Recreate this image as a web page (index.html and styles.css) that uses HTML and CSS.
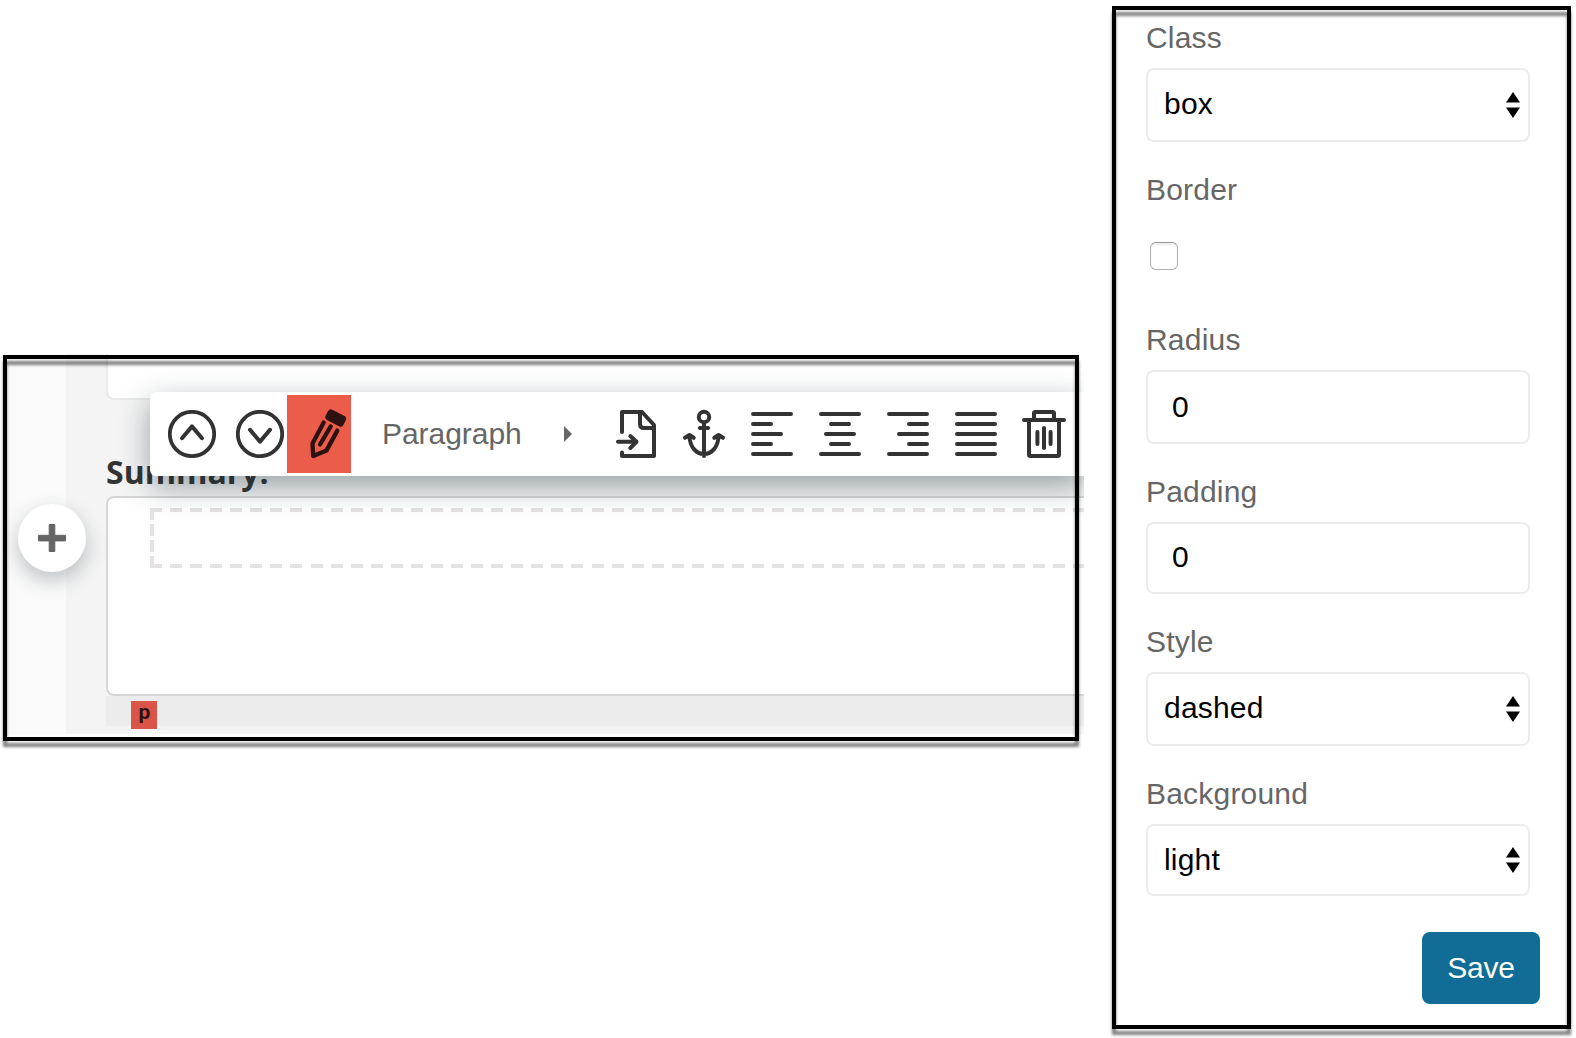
FILE: index.html
```html
<!DOCTYPE html>
<html lang="en">
<head>
<meta charset="utf-8">
<title>Paragraph settings</title>
<link rel="stylesheet" href="styles.css">
</head>
<body>
<main class="page">
  <section class="editor">
    <div class="gutter">
      <button class="add" aria-label="Add">
        <svg width="68" height="68" viewBox="0 0 68 68"><path d="M31.2 20.5h5.6v10.8h10.7v5.6h-10.7v10.6h-5.6v-10.6h-10.7v-5.6h10.7z" fill="#666" stroke="#666" stroke-width="1" stroke-linejoin="round"/></svg>
      </button>
    </div>
    <div class="canvas">
      <div class="previous-field"></div>
      <label class="summary-label">Summary:</label>
      <div class="summary-field"><div class="paragraph"></div></div>
      <div class="path-bar"><span class="path-tag">p</span></div>
    </div>
    <div class="toolbar">
      <svg class="icon" width="48" height="48" viewBox="168 410 48 48"><circle cx="192" cy="434" r="22.2"/><path d="M182 438.2L192 426.4L202 438.2"/></svg>
      <svg class="icon icon-down" width="48" height="48" viewBox="236 410 48 48"><circle cx="260" cy="434" r="22.2"/><path d="M250 429.8L260 441.6L270 429.8"/></svg>
      <div class="active-tool">
        <svg class="icon icon-dark" width="64" height="78" viewBox="287 395 64 78"><path d="M323.7 422.6L312.5 443.4L313.2 456L326.4 450.6L337.3 430.6M330.7 426.4L320 444.5"/><rect x="325.7" y="412.2" width="20" height="11.6" rx="3.2" transform="rotate(28 335.7 418)" class="solid"/></svg>
      </div>
      <span class="block-type">Paragraph</span>
      <svg class="caret" width="8" height="16" viewBox="0 0 8 16"><path d="M0 0L8 8L0 16Z" fill="#666"/></svg>
      <svg class="icon icon-file" width="42" height="52" viewBox="616 408 42 52"><path d="M622 432V412H642L654 425V456H622V452.5M640 413V424Q640 428 644 428H653M618 441.8H636M630.3 436L636.5 441.8L630.3 448"/></svg>
      <svg class="icon icon-anchor" width="44" height="52" viewBox="682 408 44 52"><circle cx="704" cy="417" r="5.2"/><path d="M699.8 428H708.2M704 423V456M689.4 436C690 447 696 454 704 454C712 454 718 447 718.6 436M685 437.8L689.4 435L693.7 437.8M714.3 437.8L718.6 435L723 437.8"/></svg>
      <svg class="icon icon-align" width="42" height="48" viewBox="0 0 42 48"><path d="M2 4H40M2 14H20M2 24H30M2 34H20M2 44H40"/></svg>
      <svg class="icon icon-align" width="42" height="48" viewBox="0 0 42 48"><path d="M2 4H40M12 14H30M7 24H35M12 34H30M2 44H40"/></svg>
      <svg class="icon icon-align" width="42" height="48" viewBox="0 0 42 48"><path d="M2 4H40M22 14H40M12 24H40M22 34H40M2 44H40"/></svg>
      <svg class="icon icon-align" width="42" height="48" viewBox="0 0 42 48"><path d="M2 4H40M2 14H40M2 24H40M2 34H40M2 44H40"/></svg>
      <svg class="icon icon-trash" width="44" height="48" viewBox="1022 410 44 48"><path d="M1024 420H1064M1029 420V454.5Q1029 456 1030.5 456H1057.5Q1059 456 1059 454.5V420M1034 419V413.5Q1034 412 1035.5 412H1052.5Q1054 412 1054 413.5V419M1037.4 432V444M1044 428V448M1050.6 432V444"/></svg>
    </div>
  </section>

  <form class="settings">
    <div class="group">
      <label for="class">Class</label>
      <div class="select"><select id="class"><option>box</option></select><svg width="14" height="26" viewBox="0 0 14 26"><path d="M7 0L14 10.5H0ZM0 15.5H14L7 26Z"/></svg></div>
    </div>
    <div class="group">
      <label for="border">Border</label>
      <div class="check-row"><input type="checkbox" id="border" class="checkbox"></div>
    </div>
    <div class="group">
      <label for="radius">Radius</label>
      <input class="field" id="radius" value="0">
    </div>
    <div class="group">
      <label for="padding">Padding</label>
      <input class="field short" id="padding" value="0">
    </div>
    <div class="group">
      <label for="style">Style</label>
      <div class="select"><select id="style"><option>dashed</option></select><svg width="14" height="26" viewBox="0 0 14 26"><path d="M7 0L14 10.5H0ZM0 15.5H14L7 26Z"/></svg></div>
    </div>
    <div class="group">
      <label for="background">Background</label>
      <div class="select short"><select id="background"><option>light</option></select><svg width="14" height="26" viewBox="0 0 14 26"><path d="M7 0L14 10.5H0ZM0 15.5H14L7 26Z"/></svg></div>
    </div>
    <button type="button" class="save">Save</button>
  </form>
</main>
</body>
</html>
```
FILE: styles.css
```css
*, *::before, *::after { box-sizing: border-box; }
body {
  margin: 0;
  background: #fff;
  font-family: "Liberation Sans", Arial, sans-serif;
  font-size: 30px;
}
.page {
  display: flex;
  align-items: flex-start;
  gap: 28px;
  width: 1576px;
  height: 1038px;
  padding: 6px 5px 0 3px;
  overflow: hidden;
}

/* Editor */
.editor {
  position: relative;
  display: flex;
  width: 1081px;
  height: 380px;
  margin-top: 348px;
  background: #f4f4f4;
}
.editor::after,
.settings::after {
  content: "";
  position: absolute;
  z-index: 3;
  border: 4px solid #000;
  filter: drop-shadow(0 6px 1.5px rgba(0, 0, 0, .5));
  pointer-events: none;
}
.editor::after {
  left: 0;
  top: 1px;
  width: 1076px;
  height: 386px;
}
.gutter {
  width: 63px;
  padding: 150px 0 0 15px;
  background: #fafafa;
}
.add {
  position: relative;
  z-index: 1;
  display: block;
  width: 68px;
  height: 68px;
  padding: 0;
  border: 0;
  border-radius: 50%;
  background: #fff;
  box-shadow: 0 8px 20px rgba(30, 45, 55, .28);
}
.add svg { display: block; }
.canvas {
  display: flex;
  flex-direction: column;
  width: 1018px;
  padding-left: 40px;
  overflow: hidden;
}
.previous-field {
  height: 46px;
  flex: none;
  border: 2px solid #e9e9e9;
  border-width: 0 0 2px 2px;
  border-radius: 0 0 0 8px;
  background: #fff;
}
.summary-label {
  height: 96px;
  padding-top: 49px;
  color: #333;
  font: bold 32px/46px "Open Sans", "Noto Sans", sans-serif;
}
.summary-field {
  height: 200px;
  padding: 10px 0 0 42px;
  border: 2px solid #d6d6d6;
  border-right: 0;
  border-radius: 8px 0 0 8px;
  background: #fff;
}
.paragraph {
  height: 60px;
  background:
    repeating-linear-gradient(90deg, #e4e2e3 0 12px, transparent 12px 20.07px) 0 0 / 100% 4px no-repeat,
    repeating-linear-gradient(90deg, #e4e2e3 0 12px, transparent 12px 20.07px) 0 100% / 100% 4px no-repeat,
    repeating-linear-gradient(180deg, #e4e2e3 0 12px, transparent 12px 16px) 0 0 / 4px 100% no-repeat;
}
.path-bar {
  height: 30px;
  padding: 5px 0 0 25px;
  background: #ececec;
}
.path-tag {
  display: block;
  width: 26px;
  height: 28px;
  padding-left: 1px;
  background: #da5547;
  color: #2d1110;
  font: bold 21px/22px Roboto, sans-serif;
  text-align: center;
}
.toolbar {
  position: absolute;
  z-index: 2;
  left: 147px;
  top: 38px;
  display: flex;
  align-items: center;
  width: 934px;
  height: 84px;
  padding-left: 18px;
  border-radius: 6px 0 0 6px;
  background: #fff;
  box-shadow: 0 10px 30px rgba(25, 45, 55, .42);
  clip-path: inset(-34px 0 -60px -50px);
}
.icon {
  flex: none;
  fill: none;
  stroke: #333;
  stroke-width: 4;
  stroke-linecap: round;
  stroke-linejoin: round;
}
.icon circle { stroke-width: 3.8; }
.icon-down { margin-left: 20px; }
.active-tool {
  height: 78px;
  margin-left: 3px;
  background: #eb5c4b;
}
.icon-dark { display: block; stroke: #2d1110; stroke-width: 4.3; }
.icon-dark .solid { fill: #2d1110; stroke: none; }
.block-type {
  width: 182px;
  margin-left: 31px;
  color: #666;
  letter-spacing: -.05px;
  line-height: 36px;
}
.caret { flex: none; }
.icon-file { margin-left: 44px; }
.icon-anchor { margin: 0 25px 0 24px; }
.icon-anchor circle { stroke-width: 4; }
.icon-align { margin-right: 26px; }
.icon-trash { margin-left: -1px; }

/* Settings */
.settings {
  position: relative;
  display: flex;
  flex-direction: column;
  gap: 30px;
  width: 456px;
  height: 1023px;
  padding: 14px 28px 0 34px;
}
.settings::after { inset: 0 -3px 0 0; }
.group {
  display: flex;
  flex-direction: column;
  gap: 12px;
  width: 384px;
}
.group label {
  color: #666;
  line-height: 36px;
  letter-spacing: .2px;
}
.field,
.select select {
  display: block;
  width: 384px;
  height: 74px;
  margin: 0;
  border: 2px solid #ececec;
  border-radius: 8px;
  background: #fff;
  color: #000;
  font: 30px "Liberation Sans", Arial, sans-serif;
  letter-spacing: .2px;
  appearance: none;
  outline: 0;
}
.field { padding: 0 24px; }
.field.short { padding-bottom: 2px; }
.select select { padding: 0 16px 4px; }
.select.short select { padding-bottom: 2px; }
.field.short,
.select.short select { height: 72px; }
.select {
  display: grid;
  align-items: center;
}
.select > * { grid-area: 1 / 1; }
.select svg {
  justify-self: end;
  margin-right: 10px;
  pointer-events: none;
}
.check-row {
  height: 72px;
  padding: 22px 0 0 4px;
}
.checkbox {
  display: block;
  width: 28px;
  height: 28px;
  margin: 0;
  border: 1px solid #b2b2b2;
  border-top-color: #999;
  border-radius: 6px;
  background: #fff;
  box-shadow: inset 0 2px 2px #ececec;
  appearance: none;
}
.save {
  align-self: flex-end;
  width: 118px;
  height: 72px;
  margin: 6px 0 0;
  padding: 0 0 1px;
  border: 0;
  border-radius: 8px;
  background: #116d96;
  color: #fff;
  font: 30px "Liberation Sans", Arial, sans-serif;
  letter-spacing: -.2px;
}
```
